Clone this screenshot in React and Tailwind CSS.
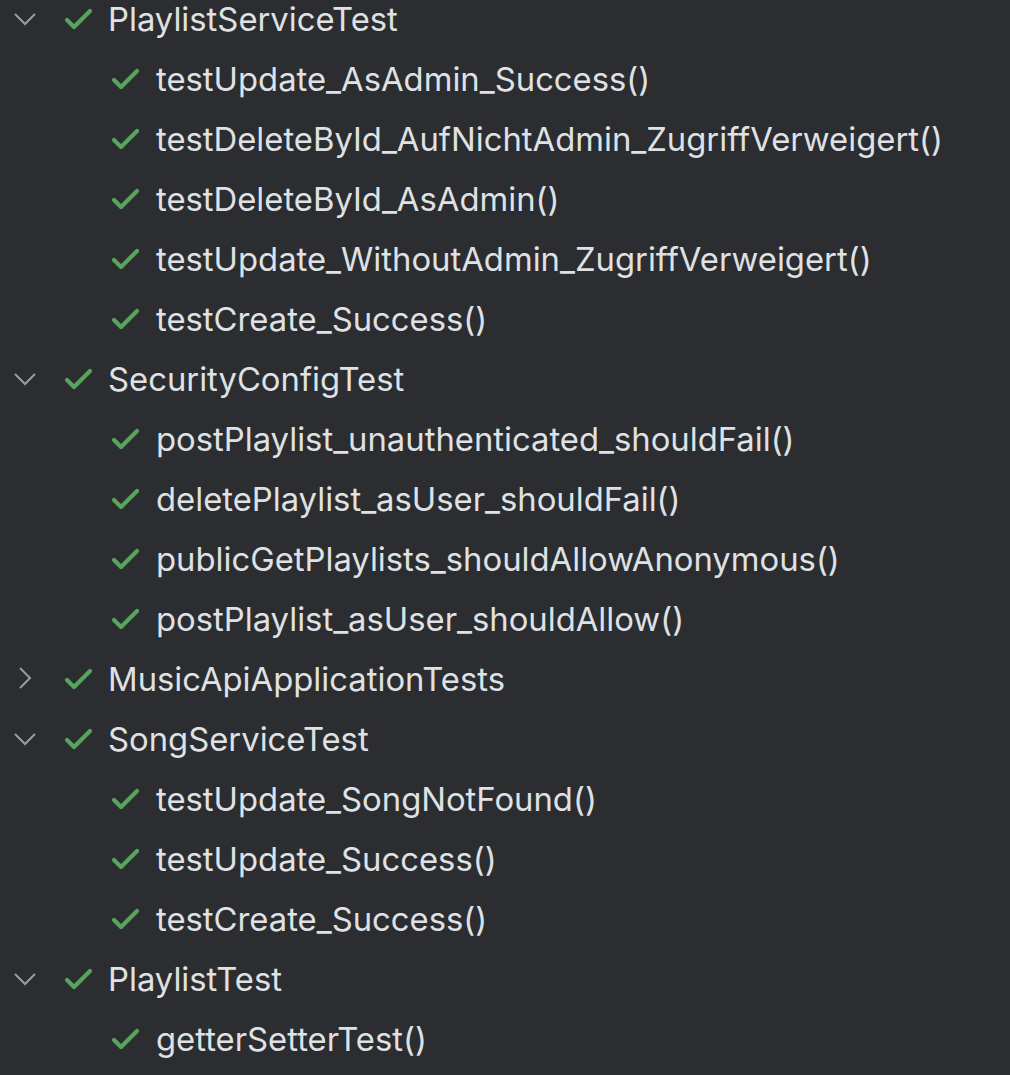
import React from "react";

const tree = [
  { name: "PlaylistServiceTest", open: true, children: [
    "testUpdate_AsAdmin_Success()",
    "testDeleteById_AufNichtAdmin_ZugriffVerweigert()",
    "testDeleteById_AsAdmin()",
    "testUpdate_WithoutAdmin_ZugriffVerweigert()",
    "testCreate_Success()",
  ]},
  { name: "SecurityConfigTest", open: true, children: [
    "postPlaylist_unauthenticated_shouldFail()",
    "deletePlaylist_asUser_shouldFail()",
    "publicGetPlaylists_shouldAllowAnonymous()",
    "postPlaylist_asUser_shouldAllow()",
  ]},
  { name: "MusicApiApplicationTests", open: false, children: [] },
  { name: "SongServiceTest", open: true, children: [
    "testUpdate_SongNotFound()",
    "testUpdate_Success()",
    "testCreate_Success()",
  ]},
  { name: "PlaylistTest", open: true, children: [
    "getterSetterTest()",
  ]},
];

function Check() {
  return (
    <svg width="32" height="32" viewBox="0 0 32 32" className="shrink-0">
      <polyline points="4,17 11,24 27,8" fill="none" stroke="#57a55d" strokeWidth="4.2" strokeLinecap="round" strokeLinejoin="round" />
    </svg>
  );
}

function Chevron({ open }) {
  return (
    <svg width="24" height="24" viewBox="0 0 24 24" className="shrink-0">
      {open ? (
        <polyline points="2,7 12,17 22,7" fill="none" stroke="#9a9da3" strokeWidth="2" />
      ) : (
        <polyline points="7,1 17,11 7,21" fill="none" stroke="#9a9da3" strokeWidth="2" />
      )}
    </svg>
  );
}

export default function App() {
  return (
    <div className="w-[1010px] h-[1075px] overflow-hidden bg-[#2b2d30] text-[#dfe1e5] text-[32.8px] leading-none" style={{ fontFamily: "Inter, 'Noto Sans', sans-serif" }}>
      <div className="-mt-[11px]">
        {tree.map((node) => (
          <div key={node.name}>
            <div className="flex items-center h-[60px] pl-[13px]">
              <Chevron open={node.open} />
              <div className="ml-[26px]"><Check /></div>
              <span className="ml-[13px]">{node.name}</span>
            </div>
            {node.children.map((c) => (
              <div key={c} className="flex items-center h-[60px] pl-[110px]">
                <Check />
                <span className="ml-[14px]">{c}</span>
              </div>
            ))}
          </div>
        ))}
      </div>
    </div>
  );
}
